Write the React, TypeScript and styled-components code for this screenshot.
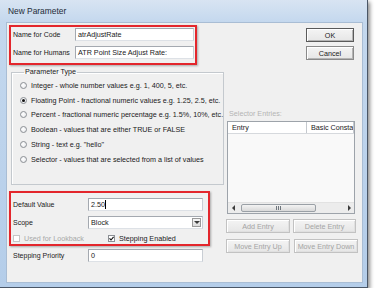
import styled, { createGlobalStyle } from "styled-components";

const Global = createGlobalStyle`
  html, body { margin: 0; padding: 0; background: #ffffff; }
  body {
    font-family: "Liberation Sans", Arial, sans-serif;
    font-size: 7.2px;
    color: #1a1a1a;
  }
`;

const Window = styled.div`
  width: 368px;
  height: 288px;
  box-sizing: border-box;
  display: flex;
  flex-direction: column;
  padding: 0 4px 4px 6px;
  background: linear-gradient(180deg, #d8e4f2 0px, #c4d8ee 22px, #b4cde9 100%);
  border-right: 1px solid #4a5666;
  border-bottom: 1px solid #4a5666;
  box-shadow: 2px 2px 4px rgba(0, 0, 0, 0.45);
`;

const TitleBar = styled.div`
  height: 22px;
  display: flex;
  align-items: center;
  padding-left: 2px;
  font-size: 8.4px;
  color: #1e2a36;
`;

const Content = styled.div`
  flex: 1;
  display: flex;
  background: #f0f0f0;
  border: 1px solid #a9bdd4;
  padding: 2px 0 0 2px;
`;

const LeftCol = styled.div`
  width: 212px;
  display: flex;
  flex-direction: column;
`;

const RightCol = styled.div`
  flex: 1;
  display: flex;
  flex-direction: column;
`;

const Callout = styled.div<{ $w: number; $h: number }>`
  width: ${(p) => p.$w}px;
  height: ${(p) => p.$h}px;
  box-sizing: border-box;
  border: 2px solid #e3262c;
  box-shadow: 1px 1px 2px rgba(0, 0, 0, 0.3);
  display: flex;
  flex-direction: column;
`;

const FieldRow = styled.div<{ $lw: number; $mt?: number }>`
  display: grid;
  grid-template-columns: ${(p) => p.$lw}px 1fr;
  align-items: center;
  margin-top: ${(p) => p.$mt ?? 0}px;
`;

const Label = styled.span`
  padding-left: 2px;
  white-space: nowrap;
  font-size: 7px;
`;

const TextBox = styled.div<{ $w: number }>`
  width: ${(p) => p.$w}px;
  height: 13px;
  box-sizing: border-box;
  background: #ffffff;
  border: 1px solid #a4a9b0;
  border-bottom-color: #dde1e6;
  border-right-color: #c9ced4;
  padding-left: 2px;
  display: flex;
  align-items: center;
  white-space: nowrap;
  overflow: hidden;
`;

const Caret = styled.span`
  display: inline-block;
  width: 1px;
  height: 9px;
  background: #000;
`;

const SelectBox = styled(TextBox)`
  justify-content: space-between;
  padding-right: 1px;
`;

const DropButton = styled.span`
  width: 9px;
  height: 9px;
  box-sizing: border-box;
  border: 1px solid #9a9a9a;
  background: linear-gradient(180deg, #f6f6f6, #dcdcdc);
  display: flex;
  align-items: center;
  justify-content: center;
`;

const GroupBox = styled.fieldset`
  margin: 3px 0 0 2px;
  width: 209px;
  height: 117px;
  box-sizing: border-box;
  padding: 2px 0 0 8px;
  border: 1px solid #c4c9ce;
  box-shadow: inset 1px 1px 0 #ffffff;
`;

const Legend = styled.legend`
  padding: 0 1px;
  margin-left: 4px;
  line-height: 8px;
`;

const RadioRow = styled.div`
  height: 14.8px;
  display: flex;
  align-items: center;
  gap: 4px;
  white-space: nowrap;
`;

const Radio = styled.span<{ $checked?: boolean }>`
  width: 7px;
  height: 7px;
  box-sizing: border-box;
  border-radius: 50%;
  border: 1px solid #8b8f94;
  background: radial-gradient(circle at 40% 40%, #ffffff, #e4e6e9);
  display: flex;
  align-items: center;
  justify-content: center;
  &::after {
    content: "";
    width: 3px;
    height: 3px;
    border-radius: 50%;
    background: ${(p) => (p.$checked ? "#111" : "transparent")};
  }
`;

const CheckRow = styled.div`
  display: flex;
  align-items: center;
  height: 10px;
  margin-top: 4px;
`;

const CheckItem = styled.div<{ $w: number; $disabled?: boolean }>`
  width: ${(p) => p.$w}px;
  display: flex;
  align-items: center;
  gap: 4px;
  white-space: nowrap;
  color: ${(p) => (p.$disabled ? "#a8a8a8" : "#1a1a1a")};
`;

const Check = styled.span<{ $disabled?: boolean }>`
  width: 7px;
  height: 7px;
  box-sizing: border-box;
  border: 1px solid ${(p) => (p.$disabled ? "#c6c6c6" : "#8b8f94")};
  background: #ffffff;
  display: flex;
  align-items: center;
  justify-content: center;
`;

const Button = styled.div<{ $w: number; $default?: boolean; $disabled?: boolean }>`
  width: ${(p) => p.$w}px;
  height: 14px;
  box-sizing: border-box;
  display: flex;
  align-items: center;
  justify-content: center;
  white-space: nowrap;
  border: 1px solid ${(p) => (p.$disabled ? "#c2c2c2" : p.$default ? "#5a5a5a" : "#8a8a8a")};
  box-shadow: inset 1px 1px 0 #ffffff, inset -1px -1px 0 ${(p) => (p.$disabled ? "#e0e0e0" : "#b4b4b4")};
  background: linear-gradient(180deg, #f4f4f4, #e6e6e6);
  color: ${(p) => (p.$disabled ? "#a4a4a4" : "#1a1a1a")};
`;

const ButtonStack = styled.div`
  display: flex;
  flex-direction: column;
  gap: 4px;
  margin: 3px 0 0 85px;
`;

const SectionLabel = styled.div`
  margin: 50px 0 0 8px;
  line-height: 8px;
  color: #b4b4b4;
`;

const ListView = styled.div`
  width: 128px;
  height: 93px;
  margin: 3px 0 0 6px;
  box-sizing: border-box;
  border: 1px solid #9da3aa;
  background: #f9f9f9;
  display: flex;
  flex-direction: column;
`;

const ListHeader = styled.div`
  height: 11px;
  display: grid;
  grid-template-columns: 79px 1fr;
  background: #ffffff;
  border-bottom: 1px solid #d6d9dd;
`;

const HeaderCell = styled.div`
  display: flex;
  align-items: center;
  padding-left: 4px;
  white-space: nowrap;
  overflow: hidden;
  border-right: 1px solid #c5c9ce;
`;

const ListBody = styled.div`
  flex: 1;
`;

const HScroll = styled.div`
  height: 10px;
  display: flex;
  align-items: center;
  background: #ececec;
  border-top: 1px solid #e2e2e2;
`;

const ScrollArrow = styled.span`
  width: 10px;
  display: flex;
  align-items: center;
  justify-content: center;
`;

const ScrollTrack = styled.div`
  flex: 1;
  display: flex;
  align-items: center;
`;

const Thumb = styled.div`
  width: 75px;
  height: 8px;
  margin-left: 3px;
  box-sizing: border-box;
  border: 1px solid #9aa0a6;
  border-radius: 2px;
  background: linear-gradient(180deg, #f3f3f3, #d9d9d9);
  display: flex;
  align-items: center;
  justify-content: center;
  gap: 1px;
`;

const Grip = styled.span`
  width: 1px;
  height: 4px;
  background: #6f767d;
`;

const ButtonRow = styled.div<{ $gap: number; $mt: number }>`
  display: flex;
  gap: ${(p) => p.$gap}px;
  margin: ${(p) => p.$mt}px 0 0 5px;
`;

const Tri = ({ dir }: { dir: "left" | "right" | "down" }) => {
  const pts =
    dir === "left" ? "3,0 3,6 0,3" : dir === "right" ? "0,0 0,6 3,3" : "0,0 6,0 3,3";
  const w = dir === "down" ? 6 : 3;
  const h = dir === "down" ? 3 : 6;
  return (
    <svg width={w} height={h} viewBox={`0 0 ${w} ${h}`}>
      <polygon points={pts} fill="#3c3c3c" />
    </svg>
  );
};

const Tick = () => (
  <svg width="5" height="5" viewBox="0 0 5 5">
    <path d="M0.5 2.4 L2 4 L4.6 0.8" fill="none" stroke="#111" strokeWidth="1.1" />
  </svg>
);

const radios = [
  { text: "Integer - whole number values e.g. 1, 400, 5, etc.", checked: false },
  { text: "Floating Point - fractional numeric values e.g. 1.25, 2.5, etc.", checked: true },
  { text: "Percent - fractional numeric percentage e.g. 1.5%, 10%, etc.", checked: false },
  { text: "Boolean - values that are either TRUE or FALSE", checked: false },
  { text: "String - text e.g. \"hello\"", checked: false },
  { text: "Selector - values that are selected from a list of values", checked: false },
];

export default function App() {
  return (
    <>
      <Global />
      <Window>
        <TitleBar>New Parameter</TitleBar>
        <Content>
          <LeftCol>
            <Callout $w={188} $h={40} style={{ paddingTop: 1 }}>
              <FieldRow $lw={64}>
                <Label>Name for Code</Label>
                <TextBox $w={119}>atrAdjustRate</TextBox>
              </FieldRow>
              <FieldRow $lw={64} $mt={5}>
                <Label>Name for Humans</Label>
                <TextBox $w={119}>ATR Point Size Adjust Rate:</TextBox>
              </FieldRow>
            </Callout>

            <GroupBox>
              <Legend>Parameter Type</Legend>
              {radios.map((r) => (
                <RadioRow key={r.text}>
                  <Radio $checked={r.checked} />
                  {r.text}
                </RadioRow>
              ))}
            </GroupBox>

            <Callout $w={201} $h={55} style={{ marginTop: 6, paddingTop: 5 }}>
              <FieldRow $lw={77}>
                <Label>Default Value</Label>
                <TextBox $w={115}>
                  2.50
                  <Caret />
                </TextBox>
              </FieldRow>
              <FieldRow $lw={77} $mt={5}>
                <Label>Scope</Label>
                <SelectBox $w={115}>
                  Block
                  <DropButton>
                    <Tri dir="down" />
                  </DropButton>
                </SelectBox>
              </FieldRow>
              <CheckRow>
                <CheckItem $w={95} $disabled style={{ paddingLeft: 2 }}>
                  <Check $disabled />
                  Used for Lookback
                </CheckItem>
                <CheckItem $w={90}>
                  <Check>
                    <Tick />
                  </Check>
                  Stepping Enabled
                </CheckItem>
              </CheckRow>
            </Callout>

            <FieldRow $lw={79} $mt={3}>
              <Label style={{ paddingLeft: 4 }}>Stepping Priority</Label>
              <TextBox $w={115}>0</TextBox>
            </FieldRow>
          </LeftCol>

          <RightCol>
            <ButtonStack>
              <Button $w={48} $default>
                OK
              </Button>
              <Button $w={48}>Cancel</Button>
            </ButtonStack>
            <SectionLabel>Selector Entries:</SectionLabel>
            <ListView>
              <ListHeader>
                <HeaderCell>Entry</HeaderCell>
                <HeaderCell>Basic Constant</HeaderCell>
              </ListHeader>
              <ListBody />
              <HScroll>
                <ScrollArrow>
                  <Tri dir="left" />
                </ScrollArrow>
                <ScrollTrack>
                  <Thumb>
                    <Grip />
                    <Grip />
                    <Grip />
                  </Thumb>
                </ScrollTrack>
                <ScrollArrow>
                  <Tri dir="right" />
                </ScrollArrow>
              </HScroll>
            </ListView>
            <ButtonRow $gap={3} $mt={5}>
              <Button $w={64} $disabled>
                Add Entry
              </Button>
              <Button $w={63} $disabled>
                Delete Entry
              </Button>
            </ButtonRow>
            <ButtonRow $gap={4} $mt={6}>
              <Button $w={64} $disabled>
                Move Entry Up
              </Button>
              <Button $w={64} $disabled>
                Move Entry Down
              </Button>
            </ButtonRow>
          </RightCol>
        </Content>
      </Window>
    </>
  );
}
